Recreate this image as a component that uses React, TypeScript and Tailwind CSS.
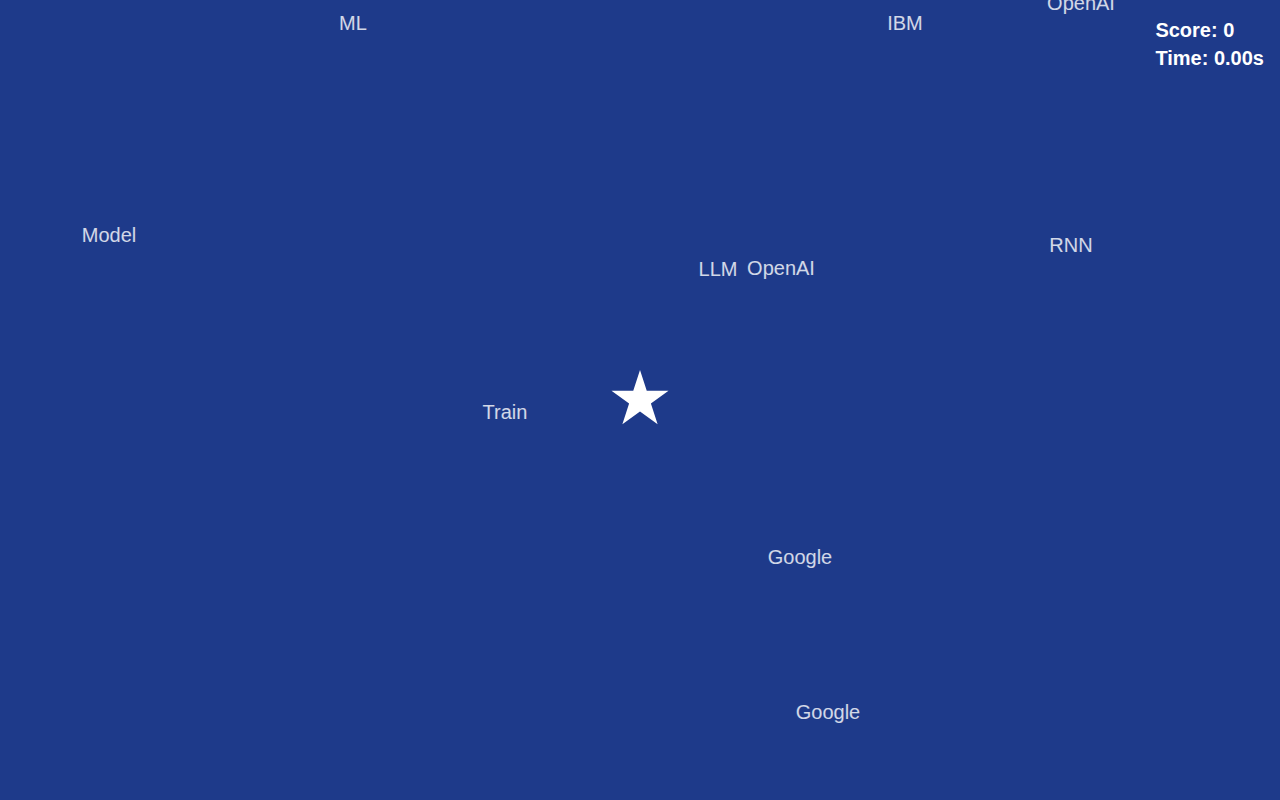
const words = [
  { text: "ML", x: 353, y: 23 },
  { text: "IBM", x: 905, y: 23 },
  { text: "OpenAI", x: 1081, y: 3 },
  { text: "Model", x: 109, y: 235 },
  { text: "LLM", x: 718, y: 269 },
  { text: "OpenAI", x: 781, y: 268 },
  { text: "RNN", x: 1071, y: 245 },
  { text: "Train", x: 505, y: 412 },
  { text: "Google", x: 800, y: 557 },
  { text: "Google", x: 828, y: 712 },
];

function Star() {
  const pts: string[] = [];
  const R = 30;
  const r = 30 * 0.382;
  for (let i = 0; i < 10; i++) {
    const rad = i % 2 === 0 ? R : r;
    const a = (Math.PI / 5) * i - Math.PI / 2;
    pts.push(`${(30 + rad * Math.cos(a)).toFixed(2)},${(30 + rad * Math.sin(a)).toFixed(2)}`);
  }
  return (
    <svg width="60" height="60" viewBox="0 0 60 60">
      <polygon points={pts.join(" ")} fill="#ffffff" />
    </svg>
  );
}

export default function App() {
  return (
    <div
      className="relative w-full h-screen overflow-hidden bg-[#1e3a8a]"
      style={{ fontFamily: '"Liberation Sans", Arial, sans-serif' }}
    >
      {/* floating words */}
      {words.map((w, i) => (
        <span
          key={i}
          className="absolute -translate-x-1/2 -translate-y-1/2 text-xl leading-7 text-white/80 whitespace-nowrap"
          style={{ left: w.x, top: w.y }}
        >
          {w.text}
        </span>
      ))}

      {/* player */}
      <div className="absolute left-[640px] top-[400px] -translate-x-1/2 -translate-y-1/2">
        <Star />
      </div>

      {/* hud */}
      <div className="absolute top-4 right-4 text-xl leading-7 font-bold text-white">
        <div>Score: 0</div>
        <div>Time: 0.00s</div>
      </div>
    </div>
  );
}
